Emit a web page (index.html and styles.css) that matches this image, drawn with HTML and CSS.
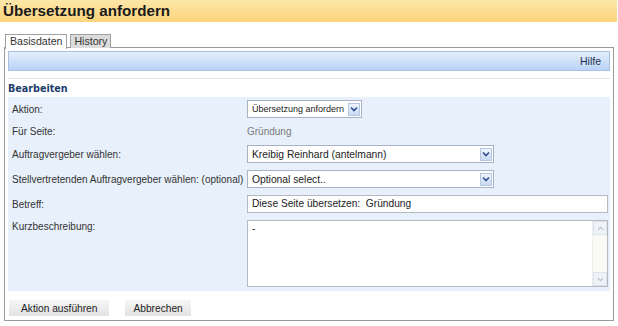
FILE: index.html
```html
<!DOCTYPE html>
<html lang="de">
<head>
  <meta charset="UTF-8" />
  <title>Übersetzung anfordern</title>
  <link rel="stylesheet" href="styles.css">
</head>
<body>
  <h1 class="page-title">Übersetzung anfordern</h1>

  <div class="tabs">
    <span class="tab active">Basisdaten</span>
    <span class="tab">History</span>
  </div>

  <div class="panel">
    <div class="toolbar"><a class="help">Hilfe</a></div>
    <h2 class="section">Bearbeiten</h2>

    <div class="form">
      <label class="lbl">Aktion:</label>
      <div class="select small">
        <span class="val">Übersetzung anfordern</span>
        <span class="arrow"><svg viewBox="0 0 8 6" width="8" height="6"><path d="M1 1.5 L4 4.5 L7 1.5" fill="none" stroke="#2f4f8f" stroke-width="1.6"/></svg></span>
      </div>

      <label class="lbl">Für Seite:</label>
      <div class="static">Gründung</div>

      <label class="lbl">Auftragvergeber wählen:</label>
      <div class="select wide">
        <span class="val">Kreibig Reinhard (antelmann)</span>
        <span class="arrow"><svg viewBox="0 0 8 6" width="8" height="6"><path d="M1 1.5 L4 4.5 L7 1.5" fill="none" stroke="#2f4f8f" stroke-width="1.6"/></svg></span>
      </div>

      <label class="lbl">Stellvertretenden Auftragvergeber wählen: (optional)</label>
      <div class="select wide">
        <span class="val">Optional select..</span>
        <span class="arrow"><svg viewBox="0 0 8 6" width="8" height="6"><path d="M1 1.5 L4 4.5 L7 1.5" fill="none" stroke="#2f4f8f" stroke-width="1.6"/></svg></span>
      </div>

      <label class="lbl">Betreff:</label>
      <div class="input">Diese Seite übersetzen:&nbsp; Gründung</div>

      <label class="lbl top">Kurzbeschreibung:</label>
      <div class="textarea">
        <div class="ta-text">-</div>
        <div class="ta-scroll">
          <span class="sb-btn"><svg viewBox="0 0 8 6" width="7" height="5"><path d="M1 4.5 L4 1.5 L7 4.5" fill="none" stroke="#b8c4d4" stroke-width="1.4"/></svg></span>
          <span class="sb-track"></span>
          <span class="sb-btn"><svg viewBox="0 0 8 6" width="7" height="5"><path d="M1 1.5 L4 4.5 L7 1.5" fill="none" stroke="#b8c4d4" stroke-width="1.4"/></svg></span>
        </div>
      </div>
    </div>

    <div class="buttons">
      <button class="btn first">Aktion ausführen</button>
      <button class="btn">Abbrechen</button>
    </div>
  </div>
</body>
</html>
```

FILE: styles.css
```css
:root {
  --border-gray: #9a9a9a;
  --form-blue: #e8f0fb;
  --label: #333333;
  --heading-blue: #1d3d6b;
}

body {
  margin: 0;
  font-family: 'Liberation Sans', Arial, sans-serif;
  font-size: 10px;
  color: var(--label);
  background: #ffffff;
}

.page-title {
  margin: 0 1px 0 0;
  height: 22px;
  line-height: 22px;
  padding-left: 3px;
  font-family: 'Liberation Sans', Arial, sans-serif;
  font-size: 15.2px;
  font-weight: bold;
  color: #1a1a1a;
  background: linear-gradient(to bottom, #fde7a8, #fbd47c);
}

.tabs {
  display: flex;
  gap: 3px;
  margin: 12px 0 0 5px;
  height: 14px;
}

.tab {
  display: block;
  height: 13px;
  line-height: 13px;
  padding: 0 3px;
  border: 1px solid #a0a0a0;
  border-bottom: none;
  background: #dcdcdc;
  color: #333;
  font-size: 10.6px;
}

.tab.active {
  background: #ffffff;
  height: 14px;
  padding: 0 4px;
  position: relative;
  z-index: 1;
}

.panel {
  margin: -1px 4px 0 4px;
  border: 1px solid var(--border-gray);
  padding: 3px 3px 4px 3px;
}

.toolbar {
  height: 18px;
  border: 1px solid #a9c0de;
  background: linear-gradient(to bottom, #e4eefc, #b9d3f6);
  display: flex;
  justify-content: flex-end;
  align-items: center;
  padding-right: 8px;
}

.help {
  color: #1f3050;
  font-size: 10.5px;
}

.section {
  margin: 7px 0 0 0;
  border-top: 1px solid #e2e2e2;
  padding: 2px 0 0 0;
  height: 16px;
  line-height: 16px;
  font-family: 'DejaVu Sans', sans-serif;
  font-size: 9.6px;
  font-weight: bold;
  color: var(--heading-blue);
}

.form {
  background: var(--form-blue);
  display: grid;
  grid-template-columns: 235px 1fr;
  row-gap: 7px;
  align-items: center;
  padding: 3px 2px 4px 4px;
}

.lbl {
  color: var(--label);
  white-space: nowrap;
}

.lbl.top {
  align-self: start;
  padding-top: 1px;
}

.static {
  color: #7a7a7a;
  height: 13px;
  line-height: 13px;
}

.select {
  height: 16px;
  border: 1px solid #a7b3c4;
  background: #ffffff;
  display: flex;
  align-items: center;
  justify-content: space-between;
  padding: 0 1px 0 4px;
  color: #222;
  white-space: nowrap;
  box-sizing: content-box;
}

.select.small {
  width: 108px;
  font-size: 9px;
}

.select.wide {
  width: 240px;
  font-size: 10.3px;
}

.arrow {
  width: 12px;
  height: 13px;
  border: 1px solid #b3c6e2;
  background: linear-gradient(to bottom, #eef4fd, #c8daf3);
  display: flex;
  align-items: center;
  justify-content: center;
  box-sizing: border-box;
}

.input {
  height: 16px;
  line-height: 16px;
  border: 1px solid #b5b9c0;
  background: #ffffff;
  padding: 0 4px;
  font-size: 10.2px;
  color: #222;
  white-space: nowrap;
}

.textarea {
  height: 65px;
  border: 1px solid #b5b9c0;
  background: #ffffff;
  display: flex;
}

.ta-text {
  flex: 1;
  padding: 2px 4px;
  color: #222;
}

.ta-scroll {
  width: 14px;
  display: flex;
  flex-direction: column;
  background: #fafaf4;
  border-left: 1px solid #eeeeee;
}

.sb-btn {
  height: 14px;
  display: flex;
  align-items: center;
  justify-content: center;
  background: #eef1f6;
  border: 1px solid #dde3ec;
  box-sizing: border-box;
}

.sb-track {
  flex: 1;
}

.buttons {
  display: flex;
  gap: 16px;
  margin-top: 9px;
  padding-left: 1px;
}

.btn {
  height: 16px;
  border: none;
  background: linear-gradient(to bottom, #f6f6f6, #e2e2e2);
  font-family: 'Liberation Sans', Arial, sans-serif;
  font-size: 10.2px;
  color: #222;
  padding: 0 8px;
}

.btn.first {
  padding: 0 12px;
}
```
